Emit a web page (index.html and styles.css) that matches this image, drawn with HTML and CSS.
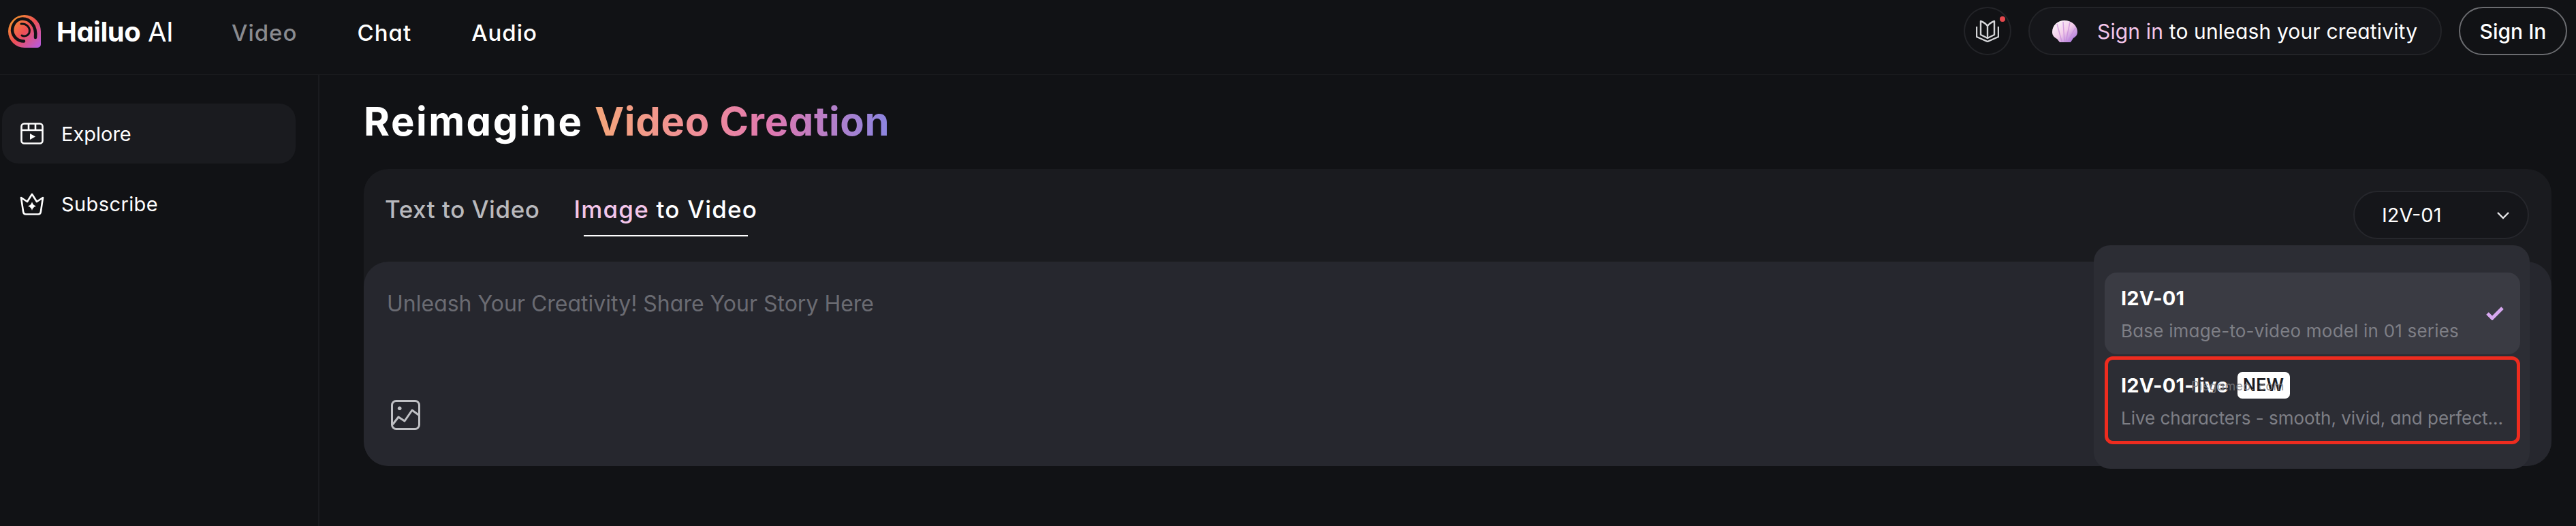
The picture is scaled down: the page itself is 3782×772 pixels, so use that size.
FILE: index.html
```html
<!DOCTYPE html>
<html lang="en">
<head>
<meta charset="utf-8">
<title>Hailuo AI</title>
<link rel="stylesheet" href="styles.css">
</head>
<body>
<header class="topbar">
  <div class="brand">
    <svg class="logo" viewBox="0 0 48 48" width="48" height="48">
      <defs><linearGradient id="lg" x1="0" y1="0" x2="1" y2="1"><stop offset="0" stop-color="#f5a623"/><stop offset=".5" stop-color="#ee4f55"/><stop offset="1" stop-color="#b45ce8"/></linearGradient></defs>
      <path d="M24 0A24 24 0 0 1 48 24V43a5 5 0 0 1-5 5H24A24 24 0 0 1 24 0Z" fill="url(#lg)"/>
      <path d="M40 33C42 16 32 5.500 21 5.500C12 5.500 6 14 6 23C7 32 14 38.500 23 38.500" fill="none" stroke="#111215" stroke-width="4.500" stroke-linecap="round"/>
      <path d="M19 13C27 12 33 19 31 26C29 31 23 32 20 30" fill="none" stroke="#111215" stroke-width="3" stroke-linecap="round"/>
    </svg>
    <span class="brand-name"><b>Hailuo</b> AI</span>
  </div>
  <nav class="topnav">
    <a class="topnav-item is-muted">Video</a>
    <a class="topnav-item">Chat</a>
    <a class="topnav-item">Audio</a>
  </nav>
  <div class="top-actions">
    <div class="book-btn">
      <svg viewBox="0 0 34 32" width="34" height="32" fill="none" stroke="#d4d5d8" stroke-width="2.4" stroke-linejoin="round">
        <path d="M17 8C14 4 10 2 7 1V21L17 26L27 21V1C24 2 20 4 17 8V26"/>
        <path d="M1 9V24L17 31L33 24V9"/>
      </svg>
      <span class="book-dot"></span>
    </div>
    <div class="credit-pill">
      <svg class="shell" viewBox="0 0 37 32" width="37" height="32">
        <defs><linearGradient id="sg" x1="0" y1="0" x2="1" y2="1"><stop offset="0" stop-color="#fff"/><stop offset=".5" stop-color="#f3cdea"/><stop offset="1" stop-color="#9a62d8"/></linearGradient></defs>
        <path d="M18 0C28 0 37 7 37 17C37 22 34 24 31 26L27 32H11L7 27C3 25 0 22 0 17C0 7 8 0 18 0Z" fill="url(#sg)"/>
        <path d="M18 31L16 2M20 31L26 3M23 31L34 11M14 31L7 5" stroke="#c889d8" stroke-width="1.5" fill="none" opacity=".7"/>
      </svg>
      <span class="credit-text"><span class="pink">Sign in</span> to unleash your creativity</span>
    </div>
    <button class="signin">Sign In</button>
  </div>
</header>
<div class="shell-body">
  <aside class="sidebar">
    <a class="side-item is-active">
      <span class="side-icon">
        <svg viewBox="0 0 34 32" width="34" height="32" fill="none" stroke="#fff" stroke-width="2.6" stroke-linejoin="round">
          <rect x="1.500" y="1.500" width="31" height="29" rx="4"/>
          <path d="M1.500 11H32.500M12 1.500V11M22 1.500V11"/>
          <path d="M14 16L22 20.500L14 25Z" fill="#fff" stroke="none"/>
        </svg>
      </span>
      <span>Explore</span>
    </a>
    <a class="side-item">
      <span class="side-icon">
        <svg viewBox="0 0 36 33" width="36" height="33" fill="none" stroke="#fff" stroke-width="2.6" stroke-linejoin="round">
          <path d="M2 7L11 13L18 2L25 13L34 7L31 27Q30.500 31.500 27 31.500H9Q5.500 31.500 5 27Z"/>
          <path d="M18 13Q19 18 24 19.500Q19 21 18 26Q17 21 12 19.500Q17 18 18 13Z" fill="#fff" stroke="none"/>
        </svg>
      </span>
      <span class="side-label-wide">Subscribe</span>
    </a>
  </aside>
  <main class="content">
    <h1 class="title">Reimagine <span class="grad">Video Creation</span></h1>
    <section class="card">
      <div class="card-head">
        <div class="tabs">
          <a class="tab">Text to Video</a>
          <a class="tab is-current"><span class="pink">Image</span> to Video</a>
        </div>
        <div class="model-select">
          <span>I2V-01</span>
          <svg viewBox="0 0 20 12" width="20" height="12" fill="none" stroke="#e8e8ea" stroke-width="2.4"><path d="M2 2L10 10L18 2"/></svg>
        </div>
      </div>
      <div class="prompt">
        <p class="placeholder">Unleash Your Creativity! Share Your Story Here</p>
        <svg class="img-icon" viewBox="0 0 43 44" width="43" height="44" fill="none" stroke="#bfc0c4" stroke-width="3" stroke-linejoin="round">
          <rect x="1.500" y="1.500" width="40" height="41" rx="6"/>
          <circle cx="12.700" cy="12.300" r="2.800" fill="#bfc0c4" stroke="none"/>
          <path d="M2.500 36L11 25L20 31L31 15L42 23"/>
        </svg>
      </div>
      <div class="menu">
        <div class="menu-item is-selected">
          <div class="menu-main">
            <div class="menu-title">I2V-01</div>
            <div class="menu-sub">Base image-to-video model in 01 series</div>
          </div>
          <svg class="check" viewBox="0 0 26 20" width="26" height="20" fill="none" stroke="#d7a8f0" stroke-width="5"><path d="M2 10L9 17L24 2"/></svg>
        </div>
        <div class="menu-item is-flagged">
          <div class="menu-main">
            <div class="menu-title">I2V-01-live <span class="badge">NEW</span></div>
            <div class="menu-sub">Live characters - smooth, vivid, and perfect...</div>
          </div>
          <span class="watermark">Pisgameo. com</span>
        </div>
      </div>
    </section>
  </main>
</div>
</body>
</html>
```

FILE: styles.css
```css
* { box-sizing: border-box; }
html, body { margin: 0; height: 100%; }
body {
  background: #111215;
  color: #fff;
  font-family: Inter, "Liberation Sans", sans-serif;
  font-feature-settings: "cv11";
  overflow: hidden;
}
.topbar {
  height: 110px;
  display: flex;
  align-items: center;
  border-bottom: 1px solid #1a1b1f;
  padding: 0 13px 18px 12px;
}
.brand { display: flex; align-items: center; gap: 23px; width: 328px; }
.logo { flex: none; }
.brand-name { font-size: 40px; font-weight: 400; letter-spacing: -0.5px; white-space: nowrap; padding-top: 2px; }
.brand-name b { font-weight: 700; }
.topnav { display: flex; gap: 88px; padding-top: 5px; }
.topnav-item { font-size: 33px; font-weight: 500; letter-spacing: 1px; color: #fff; }
.topnav-item.is-muted { color: #8a8b8f; }
.top-actions { margin-left: auto; display: flex; align-items: center; gap: 25px; }
.book-btn {
  position: relative;
  width: 70px; height: 71px;
  border: 2px solid #232428;
  border-radius: 50%;
  display: flex; align-items: center; justify-content: center;
}
.book-dot {
  position: absolute; top: 12px; right: 7px;
  width: 8px; height: 8px; border-radius: 50%;
  background: #e5484d;
}
.credit-pill {
  width: 607px; height: 71px;
  border: 2px solid #232428;
  border-radius: 36px;
  background: #15161a;
  display: flex; align-items: center;
  padding-left: 33px; gap: 29px;
}
.shell { flex: none; }
.credit-text { font-size: 30px; letter-spacing: 0.15px; white-space: nowrap; }
.pink { color: #f3c6ea; }
.signin {
  width: 159px; height: 71px;
  border: 2px solid #6b6c70;
  border-radius: 36px;
  background: transparent;
  color: #fff;
  font: inherit;
  font-size: 30px;
  font-weight: 500;
}
.shell-body { display: flex; height: 662px; }
.sidebar {
  width: 469px;
  border-right: 2px solid #1a1b1f;
  padding: 42px 33px 0 3px;
  display: flex; flex-direction: column; gap: 15px;
}
.side-item {
  height: 88px;
  display: flex; align-items: center; gap: 25px;
  padding-left: 26px;
  border-radius: 24px;
  font-size: 29px;
}
.side-icon { width: 36px; display: flex; justify-content: center; flex: none; }
.side-label-wide { letter-spacing: 0.4px; }
.side-item.is-active { background: #1a1b1f; }
.content { flex: 1; padding: 33px 36px 0 65px; }
.title { margin: 0 0 35px; font-size: 58px; line-height: 70px; font-weight: 700; letter-spacing: 2.5px; }
.grad {
  background: linear-gradient(90deg, #f5a67a, #ee8a9c 40%, #de78b0 60%, #8b85e0);
  -webkit-background-clip: text; background-clip: text;
  color: transparent;
  letter-spacing: 0.65px;
}
.card {
  position: relative;
  background: #1a1b1f;
  border-radius: 36px;
  height: 436px;
}
.card-head { height: 136px; display: flex; justify-content: space-between; padding: 32px 33px 0 31px; }
.tabs { display: flex; gap: 50px; }
.tab { font-size: 35px; font-weight: 500; letter-spacing: 0.55px; color: #b8b9bd; height: 67px; position: relative; padding-top: 6px; }
.tab.is-current { color: #fff; letter-spacing: 1.2px; }
.tab.is-current::after {
  content: ""; position: absolute;
  left: 15px; right: 14px; bottom: 0;
  height: 2px; background: #fff;
}
.model-select {
  width: 258px; height: 71px;
  border: 2px solid #26272c;
  border-radius: 36px;
  background: #15161a;
  display: flex; align-items: center; justify-content: space-between;
  padding: 0 26px 0 40px;
  font-size: 29px;
}
.prompt {
  height: 300px;
  background: #26272e;
  border-radius: 36px;
  padding: 42px 34px 53px 34px;
  display: flex; flex-direction: column; justify-content: space-between;
}
.placeholder { margin: 0; font-size: 32px; color: #6a6b72; }
.img-icon { margin-left: 6px; }
.menu {
  position: absolute;
  top: 112px; right: 32px;
  width: 640px; height: 328px;
  background: #2c2d34;
  border-radius: 24px;
  padding: 40px 14px 0 16px;
  display: flex; flex-direction: column; gap: 3px;
}
.menu-item {
  position: relative;
  height: 120px;
  border-radius: 18px;
  padding: 0 24px;
  display: flex; align-items: center; justify-content: space-between;
}
.menu-item.is-selected { background: #3a3b43; }
.menu-item.is-flagged { height: 129px; border: 5px solid #ee2c1f; border-radius: 12px; padding: 0 4px 0 19px; }
.menu-main { align-self: stretch; min-width: 0; flex: 1; padding-top: 17px; }
.menu-title { font-size: 29px; font-weight: 700; letter-spacing: 0.2px; display: flex; align-items: center; gap: 13px; height: 40px; white-space: nowrap; }
.menu-sub { margin-top: 13px; font-size: 26px; letter-spacing: 0.2px; color: #7e7f86; white-space: nowrap; }
.is-flagged .menu-sub { letter-spacing: -0.02px; }
.badge {
  display: inline-flex; align-items: center; justify-content: center;
  width: 77px; height: 39px;
  background: #fff; color: #1a1b1f;
  border-radius: 7px;
  font-size: 25px; font-weight: 600;
}
.check { flex: none; }
.watermark {
  position: absolute; left: 122px; top: 28px;
  font-size: 18px; letter-spacing: 0.4px;
  color: rgba(125, 125, 130, 0.8);
  white-space: nowrap;
}
```
